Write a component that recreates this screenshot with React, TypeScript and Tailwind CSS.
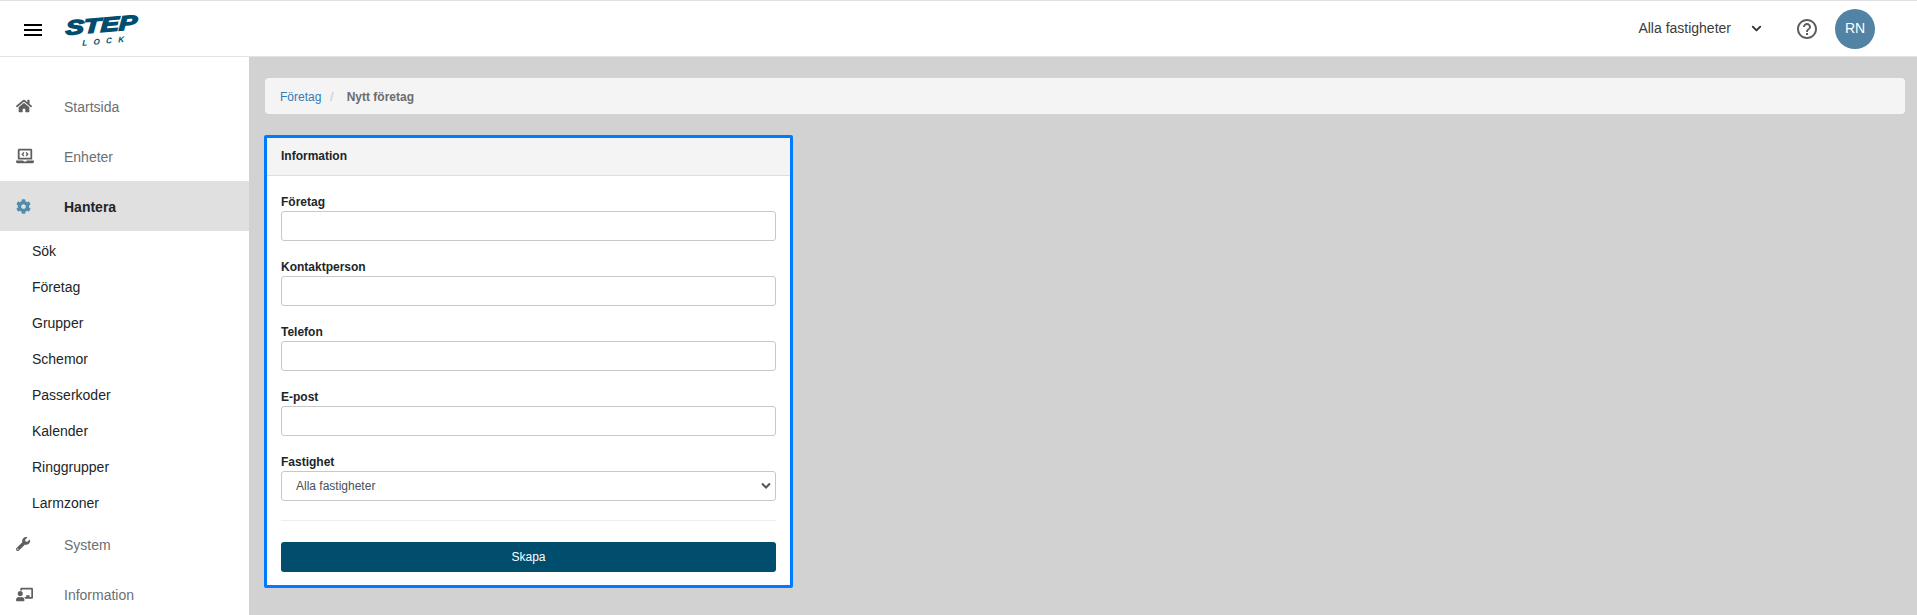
import React from "react";
import { FaHome, FaCog, FaWrench, FaChalkboardTeacher, FaLaptopCode } from "react-icons/fa";
import { FiChevronDown } from "react-icons/fi";
import { MdHelpOutline } from "react-icons/md";

const font = { fontFamily: '"Liberation Sans", Arial, sans-serif' };

function Nav({ icon, label, active }: { icon: React.ReactNode; label: string; active?: boolean }) {
  return (
    <div className={`flex items-center h-[50px] ${active ? "bg-[#e0e0e0]" : ""}`}>
      <span className={`w-[64px] pl-[16px] flex items-center ${active ? "text-[#528bab]" : "text-[#5f5f5f]"}`}>{icon}</span>
      <span className={`pt-[2px] text-[14px] ${active ? "font-bold text-[#212529]" : "text-[#6c6f73]"}`}>{label}</span>
    </div>
  );
}

function Field({ label, select }: { label: string; select?: boolean }) {
  return (
    <div className="mb-[19px]">
      <label className="block text-[12px] font-bold text-[#212529] leading-[14px] mb-[2px]">{label}</label>
      {select ? (
        <div className="relative h-[30px] rounded-[3px] border border-[#c8c8c8] bg-white flex items-center pl-[14px] text-[12px] text-[#495057]">
          Alla fastigheter
          <svg className="absolute right-[4px] top-[10px]" width="10" height="8" viewBox="0 0 10 8"><path d="M1 1.5 5 5.5 9 1.5" fill="none" stroke="#555" strokeWidth="2" /></svg>
        </div>
      ) : (
        <input className="block w-full h-[30px] rounded-[3px] border border-[#c8c8c8] bg-white" />
      )}
    </div>
  );
}

export default function App() {
  return (
    <div className="w-[1917px] h-[615px] overflow-hidden flex flex-col bg-[#d2d2d2]" style={font}>
      <header className="h-[57px] bg-white border-t border-t-[#e0e0e0] border-b border-b-[#e3e3e3] flex items-center shrink-0 pl-[24px] pr-[42px]">
        <svg className="mt-[2px]" width="18" height="12" viewBox="0 0 18 12"><path d="M0 1h18M0 6h18M0 11h18" stroke="#000" strokeWidth="2" /></svg>
        <svg className="ml-[21px] mt-[1px] overflow-visible" width="76" height="34" viewBox="0 0 76 34">
          <g transform="rotate(-5 38 15) skewX(-6)">
            <text x="40" y="20" textAnchor="middle" fontSize="20" fontWeight="900" fontStyle="italic" fill="#004d6e" stroke="#004d6e" strokeWidth="1.4" textLength="72" lengthAdjust="spacingAndGlyphs" style={font}>STEP</text>
            <text x="42" y="32" textAnchor="middle" fontSize="8" fontWeight="700" fontStyle="italic" fill="#004d6e" textLength="42" style={font}>LOCK</text>
          </g>
        </svg>
        <div className="ml-auto flex items-center">
          <span className="text-[14px] text-[#3b3b3b]">Alla fastigheter</span>
          <FiChevronDown className="ml-[18px] text-[#333]" size={15} strokeWidth={3} />
          <MdHelpOutline className="ml-[31px] text-[#5e5e5e]" size={24} />
          <div className="ml-[16px] w-[40px] h-[40px] rounded-full bg-[#5283a4] text-white text-[14px] flex items-center justify-center">RN</div>
        </div>
      </header>
      <div className="flex flex-1 min-h-0">
        <aside className="w-[249px] bg-white pt-[24px] shrink-0 overflow-hidden">
          <Nav icon={<FaHome size={16} />} label="Startsida" />
          <Nav icon={<FaLaptopCode size={18} />} label="Enheter" />
          <Nav icon={<FaCog size={15} />} label="Hantera" active />
          <div className="pt-[2px] -mb-[2px]">
            {["Sök", "Företag", "Grupper", "Schemor", "Passerkoder", "Kalender", "Ringgrupper", "Larmzoner"].map((t) => (
              <div key={t} className="h-[36px] flex items-center pl-[32px] text-[14px] text-[#212529]">{t}</div>
            ))}
          </div>
          <Nav icon={<FaWrench size={14} />} label="System" />
          <Nav icon={<FaChalkboardTeacher size={17} />} label="Information" />
        </aside>
        <main className="flex-1 pt-[21px] pl-[16px] pr-[12px] min-w-0">
          <div className="h-[36px] rounded-[4px] bg-[#f4f4f4] flex items-center pl-[15px] pt-[1px] text-[12px]">
            <span className="text-[#337ab7]">Företag</span>
            <span className="mx-[9px] text-[#c4c4c4]">/</span>
            <span className="ml-[4px] font-bold text-[#6c6c6c]">Nytt företag</span>
          </div>
          <section className="mt-[21px] -ml-[1px] w-[529px] h-[453px] border-[3px] border-[#007bff] bg-white rounded-[2px]">
            <div className="h-[38px] bg-[#f4f4f4] border-b border-[#dedede] flex items-center pl-[14px] pb-[2px] text-[12px] font-bold text-[#212529]">Information</div>
            <div className="px-[14px] pt-[19px]">
              <Field label="Företag" />
              <Field label="Kontaktperson" />
              <Field label="Telefon" />
              <Field label="E-post" />
              <Field label="Fastighet" select />
              <div className="border-t border-[#eeeeee] mt-[1px]" />
              <button className="mt-[21px] w-full h-[30px] rounded-[3px] bg-[#004d6e] text-white text-[12px]">Skapa</button>
            </div>
          </section>
        </main>
      </div>
    </div>
  );
}
